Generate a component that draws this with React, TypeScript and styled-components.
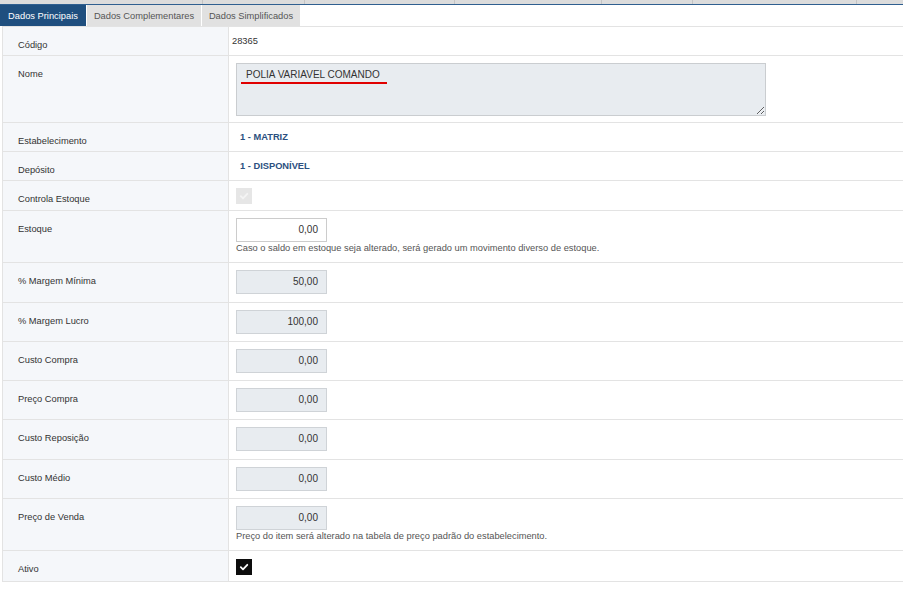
import React from "react";
import styled, { createGlobalStyle } from "styled-components";

const Global = createGlobalStyle`
  html, body { margin: 0; padding: 0; background: #fff; }
  body { font-family: "Liberation Sans", Arial, sans-serif; font-size: 9.3px; color: #333; }
  * { box-sizing: border-box; }
`;

const Page = styled.div`
  width: 903px;
  overflow: hidden;
`;

const HeaderStrip = styled.div`
  display: flex;
  height: 4px;
  background: #dcdcdc;
  border-bottom: 1px solid #2f5f90;
  box-sizing: content-box;
`;

const HeaderCell = styled.div<{ $w: number }>`
  flex: 0 0 ${(p) => p.$w}px;
  border-right: 1px solid #c4c4c4;
`;

const Tabs = styled.div`
  display: flex;
  height: 21px;
  gap: 1px;
`;

const Tab = styled.div<{ $active?: boolean; $w: number }>`
  width: ${(p) => p.$w}px;
  display: flex;
  align-items: center;
  justify-content: center;
  background: ${(p) => (p.$active ? "#1f4f7f" : "#e1e1e1")};
  color: ${(p) => (p.$active ? "#fff" : "#555")};
  font-size: 9.3px;
`;

const Table = styled.div`
  margin-left: 2px;
  border-top: 1px solid #e3e3e3;
  border-left: 1px solid #e3e3e3;
`;

const Row = styled.div`
  display: grid;
  grid-template-columns: 226px 1fr;
  border-bottom: 1px solid #e3e3e3;
`;

const Label = styled.div`
  background: #f5f7fa;
  border-right: 1px solid #e3e3e3;
  padding: 11px 0 0 15px;
  line-height: 14px;
  color: #333;
`;

const Value = styled.div<{ $h: number; $pl?: number; $pt?: number }>`
  min-height: ${(p) => p.$h}px;
  padding: ${(p) => p.$pt ?? 7}px 8px 0 ${(p) => p.$pl ?? 7}px;
  line-height: 14px;
  display: flex;
  flex-direction: column;
  align-items: flex-start;
`;

const Strong = styled.span`
  font-weight: bold;
  color: #2c5080;
  padding-left: 8px;
`;

const NumInput = styled.div<{ $disabled?: boolean }>`
  width: 91px;
  height: 24px;
  border: 1px solid ${(p) => (p.$disabled ? "#cfd3d7" : "#ccc")};
  background: ${(p) => (p.$disabled ? "#e8ecf0" : "#fff")};
  text-align: right;
  padding: 0 8px;
  line-height: 22px;
  font-size: 10px;
  color: #333;
`;

const Help = styled.div`
  color: #555;
  line-height: 12px;
`;

const TextAreaWrap = styled.div`
  position: relative;
  width: 530px;
  height: 53px;
`;

const NameBox = styled.textarea`
  width: 530px;
  height: 53px;
  resize: vertical;
  background: #e8ecf0;
  border: 1px solid #cacdd0;
  font-family: "Liberation Sans", Arial, sans-serif;
  font-size: 10px;
  color: #333;
  padding: 4px 9px;
  line-height: 13px;
  outline: none;
  display: block;
`;

const SpellMark = styled.div`
  position: absolute;
  left: 5px;
  top: 19px;
  width: 146px;
  height: 2px;
  background: #e00000;
  pointer-events: none;
`;

const Check = styled.div<{ $on?: boolean }>`
  width: 16px;
  height: 16px;
  background: ${(p) => (p.$on ? "#0d0d0d" : "#e6e6e6")};
  display: flex;
  align-items: center;
  justify-content: center;
`;

const CheckMark = ({ color }: { color: string }) => (
  <svg width="10" height="10" viewBox="0 0 10 10">
    <path d="M1.8 5.2 L4 7.3 L8.3 2.8" fill="none" stroke={color} strokeWidth="1.8" strokeLinecap="round" strokeLinejoin="round" />
  </svg>
);

const headerCells = [203, 102, 150, 147, 91, 164, 60];

type NumRow = { label: string; value: string; h: number };

const numRows: NumRow[] = [
  { label: "% Margem Mínima", value: "50,00", h: 39 },
  { label: "% Margem Lucro", value: "100,00", h: 38 },
  { label: "Custo Compra", value: "0,00", h: 38 },
  { label: "Preço Compra", value: "0,00", h: 38 },
  { label: "Custo Reposição", value: "0,00", h: 39 },
  { label: "Custo Médio", value: "0,00", h: 38 },
];

export default function App() {
  return (
    <Page>
      <Global />
      <HeaderStrip>
        {headerCells.map((w, i) => (
          <HeaderCell key={i} $w={w} />
        ))}
      </HeaderStrip>
      <Tabs>
        <Tab $active $w={86}>Dados Principais</Tab>
        <Tab $w={114}>Dados Complementares</Tab>
        <Tab $w={98}>Dados Simplificados</Tab>
      </Tabs>
      <Table>
        <Row>
          <Label>Código</Label>
          <Value $h={28} $pl={3}>28365</Value>
        </Row>
        <Row>
          <Label>Nome</Label>
          <Value $h={66} $pt={7}>
            <TextAreaWrap>
              <NameBox readOnly defaultValue="POLIA VARIAVEL COMANDO" spellCheck={false} />
              <SpellMark />
            </TextAreaWrap>
          </Value>
        </Row>
        <Row>
          <Label>Estabelecimento</Label>
          <Value $h={28} $pl={3}>
            <Strong>1 - MATRIZ</Strong>
          </Value>
        </Row>
        <Row>
          <Label>Depósito</Label>
          <Value $h={28} $pl={3}>
            <Strong>1 - DISPONÍVEL</Strong>
          </Value>
        </Row>
        <Row>
          <Label>Controla Estoque</Label>
          <Value $h={29} $pt={7}>
            <Check>
              <CheckMark color="#f4f4f4" />
            </Check>
          </Value>
        </Row>
        <Row>
          <Label>Estoque</Label>
          <Value $h={51} $pt={7}>
            <NumInput>0,00</NumInput>
            <Help>Caso o saldo em estoque seja alterado, será gerado um movimento diverso de estoque.</Help>
          </Value>
        </Row>
        {numRows.map((r) => (
          <Row key={r.label}>
            <Label>{r.label}</Label>
            <Value $h={r.h} $pt={7}>
              <NumInput $disabled>{r.value}</NumInput>
            </Value>
          </Row>
        ))}
        <Row>
          <Label>Preço de Venda</Label>
          <Value $h={51} $pt={7}>
            <NumInput $disabled>0,00</NumInput>
            <Help>Preço do item será alterado na tabela de preço padrão do estabelecimento.</Help>
          </Value>
        </Row>
        <Row>
          <Label>Ativo</Label>
          <Value $h={30} $pt={8}>
            <Check $on>
              <CheckMark color="#fff" />
            </Check>
          </Value>
        </Row>
      </Table>
    </Page>
  );
}
